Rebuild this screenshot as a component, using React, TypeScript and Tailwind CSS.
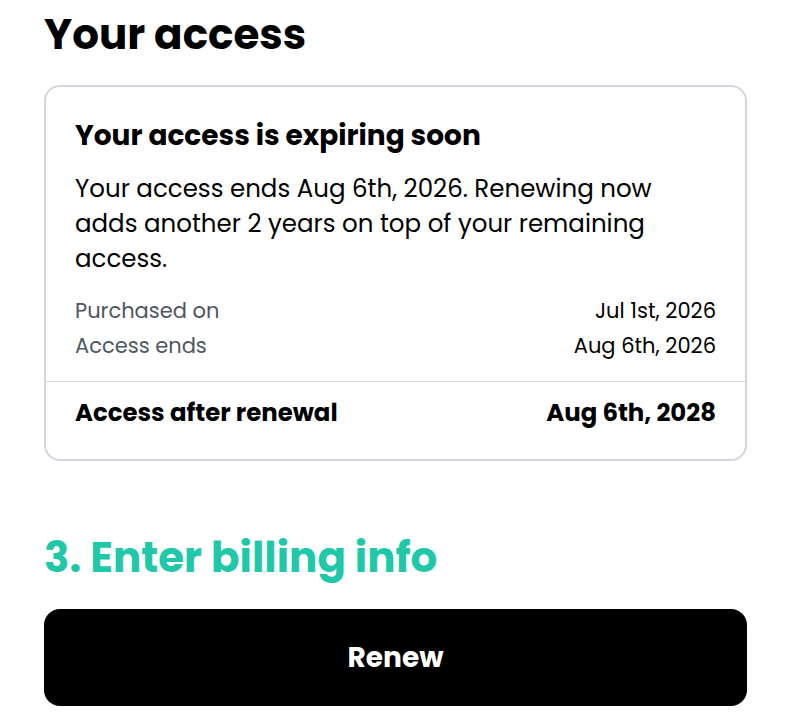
import React from "react";

const rows = [
  { label: "Purchased on", value: "Jul 1st, 2026" },
  { label: "Access ends", value: "Aug 6th, 2026" },
];

function App() {
  return (
    <div className="min-h-screen bg-white pl-[44px] pr-[46px] font-['Poppins','Inter',sans-serif] text-black">
      <h1 className="pt-[9px] text-[42px] font-bold leading-[52px]">Your access</h1>

      <div className="mt-[24px] rounded-[16px] border-2 border-[#d4d6dd]">
        <div className="px-[29px] pt-[31px] pb-[18px]">
          <h2 className="text-[28px] font-bold leading-[36px]">Your access is expiring soon</h2>
          <p className="mt-[17px] max-w-[610px] text-[24.5px] leading-[35px]">
            Your access ends Aug 6th, 2026. Renewing now adds another 2 years on top of your
            remaining access.
          </p>
          <div className="mt-[17px] flex flex-col">
            {rows.map((row) => (
              <div key={row.label} className="flex justify-between text-[21px] leading-[35px]">
                <span className="text-[#4f5663]">{row.label}</span>
                <span>{row.value}</span>
              </div>
            ))}
          </div>
        </div>
        <div className="flex justify-between border-t border-[#d4d6dd] px-[29px] pt-[15px] pb-[30px] text-[24.4px] font-bold leading-[32px]">
          <span>Access after renewal</span>
          <span>Aug 6th, 2028</span>
        </div>
      </div>

      <h2 className="mt-[71px] text-[42px] font-bold leading-[52px] text-[#1fc8a8]">
        3. Enter billing info
      </h2>

      <button className="mt-[25px] flex h-[97px] w-full items-center justify-center rounded-[16px] bg-black text-[28px] font-bold text-white">
        Renew
      </button>
    </div>
  );
}

export default App;
